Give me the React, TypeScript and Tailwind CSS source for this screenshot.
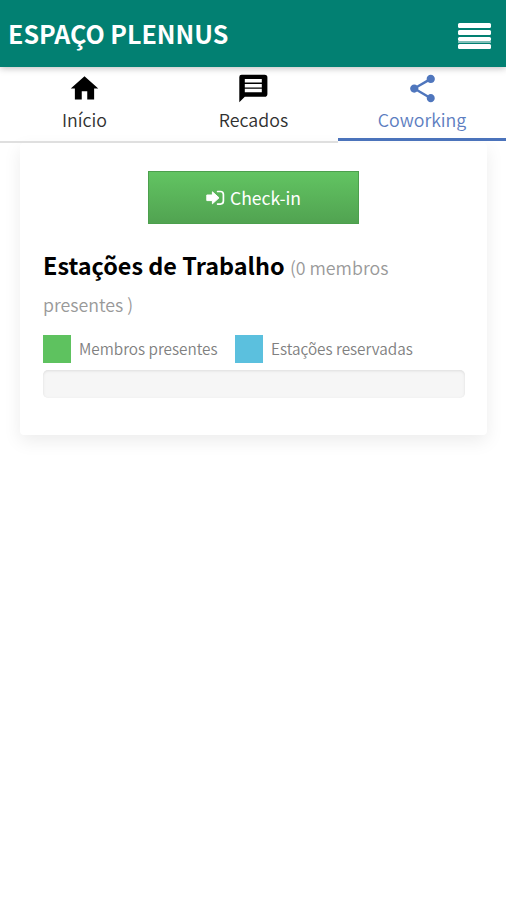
import React from "react";
import { MdHome, MdShare } from "react-icons/md";

type IconProps = { size?: number; color?: string };

function MessageIcon({ color = "#000" }: IconProps) {
  return (
    <svg width="33" height="33" viewBox="0 0 33 33" className="shrink-0">
      <path d="M4.6 2.7H27.6Q30.4 2.7 30.4 5.5V21.9Q30.4 24.7 27.6 24.7H7.8L2.3 30.2V5Q2.3 2.7 4.6 2.7Z" fill={color} />
      <path d="M7.8 7H24.8V10.6H7.8ZM7.8 12H24.8V15.4H7.8ZM7.8 16.8H24.8V20.2H7.8Z" fill="#fff" />
    </svg>
  );
}

const tabs = [
  { label: "Início", Icon: MdHome, active: false },
  { label: "Recados", Icon: MessageIcon, active: false },
  { label: "Coworking", Icon: MdShare, active: true },
];

function SignInIcon() {
  return (
    <svg width="19" height="16" viewBox="0 0 19 16" fill="none" className="shrink-0">
      <path d="M0.8 5H6.4V1.8L13 7.8L6.4 13.8V10.6H0.8Z" fill="#fff" stroke="#fff" strokeLinejoin="round" />
      <path d="M11.6 1.5H14.4Q17.4 1.5 17.4 4.5V11.1Q17.4 14.1 14.4 14.1H11.6" stroke="#fff" strokeWidth="1.7" strokeLinecap="round" />
    </svg>
  );
}

export default function App() {
  return (
    <div className="min-h-[900px] w-[506px] overflow-hidden bg-white font-['Noto_Sans_CJK_JP','Noto_Sans',sans-serif]">
      <header className="relative z-10 flex h-[67px] items-center justify-between bg-[#028072] pr-[15px] pl-2 shadow-[0_1px_7px_rgba(0,0,0,0.28)]">
        <h1 className="text-[25px] leading-[67px] font-bold whitespace-nowrap text-white">ESPAÇO PLENNUS</h1>
        <div className="mt-[5px] flex flex-col">
          <span className="h-[5px] w-[33px] rounded-[1.5px] bg-white" />
          <span className="mt-[2px] h-[5px] w-[33px] rounded-[1.5px] bg-white" />
          <span className="mt-[2px] h-[4px] w-[33px] rounded-[1.5px] bg-white" />
          <span className="h-[2px] w-[33px] bg-white/50" />
          <span className="mt-px h-[5px] w-[33px] rounded-[1.5px] bg-white" />
        </div>
      </header>
      <nav className="grid h-[76px] grid-cols-[169px_169px_168px] items-start">
        {tabs.map(({ label, Icon, active }) => (
          <a
            key={label}
            className={
              active
                ? "flex h-[74px] flex-col items-center border-b-3 border-[#4b73bb] pt-[5px] text-[#5c7dc0]"
                : "flex h-[76px] flex-col items-center border-b-2 border-[#dfdfdf] pt-[5px] text-[#303030]"
            }
          >
            <Icon size={33} color={active ? "#4f76bd" : "#000"} />
            <span className="text-[17.8px] leading-7 font-[350]">{label}</span>
          </a>
        ))}
      </nav>
      <main className="mx-5 mr-[19px] h-[292px] rounded-[4px] bg-white px-[23px] pt-7 shadow-[0_6px_18px_rgba(0,0,0,0.08)]">
        <button className="mx-auto flex h-[53px] w-[211px] items-center justify-center gap-[5px] border border-[#4c9f4d] bg-linear-to-b from-[#62c462] to-[#51a351] text-[17.6px] text-white">
          <SignInIcon />
          <span className="leading-[50px]">Check-in</span>
        </button>
        <h2 className="mt-[23px] text-[23.4px] leading-[37px] font-bold text-black">
          Estações de Trabalho{" "}
          <small className="text-[17.8px] leading-none font-[350] text-[#999]">
            (0 membros
            <br />
            presentes )
          </small>
        </h2>
        <div className="mt-[14px] flex h-7 items-center text-[15.3px] leading-[26px] font-[350] whitespace-nowrap text-[#808080]">
          <span className="mr-2 size-7 bg-[#5ec25f]" />
          <span className="w-[156px] pb-[2px]">Membros presentes</span>
          <span className="mr-2 size-7 bg-[#5bc0de]" />
          <span className="pb-[2px]">Estações reservadas</span>
        </div>
        <div className="mt-[7px] h-7 w-[422px] rounded-[5px] bg-[#f6f6f6] shadow-[inset_0_1px_3px_rgba(0,0,0,0.1)]" />
      </main>
    </div>
  );
}
